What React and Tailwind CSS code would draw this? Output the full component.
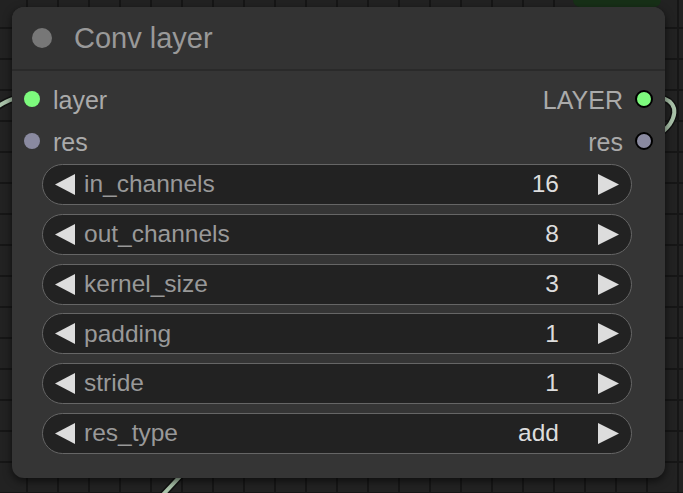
import React from "react";

const slots = [
  { inName: "layer", outName: "LAYER", color: "bg-[#7dfa7d]" },
  { inName: "res", outName: "res", color: "bg-[#8a8aa0]" },
];

const widgets = [
  { name: "in_channels", value: "16" },
  { name: "out_channels", value: "8" },
  { name: "kernel_size", value: "3" },
  { name: "padding", value: "1" },
  { name: "stride", value: "1" },
  { name: "res_type", value: "add" },
];

const Arrow = ({ dir }) => (
  <svg width="21" height="21" viewBox="0 0 21 21" className="shrink-0">
    {dir === "left" ? (
      <polygon points="20,0 20,21 0,10.5" fill="#dddddd" />
    ) : (
      <polygon points="0,0 0,21 21,10.5" fill="#dddddd" />
    )}
  </svg>
);

const Widget = ({ name, value }) => (
  <div className="h-[41px] flex items-center rounded-full border-[1.5px] border-[#666] bg-[#222] pl-[12px] pr-[12px] text-[24.5px]">
    <Arrow dir="left" />
    <span className="ml-[8px] text-[#999] flex-1">{name}</span>
    <span className="text-[#ddd] mr-[39px]">{value}</span>
    <Arrow dir="right" />
  </div>
);

export default function App() {
  return (
    <div
      className="relative w-[683px] h-[493px] overflow-hidden bg-[#222] bg-[linear-gradient(#161616_2px,transparent_2px),linear-gradient(90deg,#161616_2px,transparent_2px)] bg-[size:31px_31px] bg-[position:-5px_-4px]"
      style={{ fontFamily: '"Liberation Sans", Arial, sans-serif' }}
    >
      {/* other node peeking from the top */}
      <div className="absolute left-[573px] top-0 w-[88px] h-[7px] bg-[#173017] rounded-b-[8px]" />

      {/* links behind the node */}
      <svg className="absolute inset-0" width="683" height="493">
        <g fill="none" strokeLinecap="round">
          <path d="M-4 108 C 4 102, 10 99, 20 97" stroke="#111" strokeWidth="7" />
          <path d="M-4 108 C 4 102, 10 99, 20 97" stroke="#a9c2a9" strokeWidth="4" />
          <path d="M650 97 C 672 96, 680 108, 670 124 C 664 132, 660 134, 656 136" stroke="#111" strokeWidth="7" />
          <path d="M650 97 C 672 96, 680 108, 670 124 C 664 132, 660 134, 656 136" stroke="#a9c2a9" strokeWidth="4" />
          <path d="M186 470 L 158 500" stroke="#111" strokeWidth="7" />
          <path d="M186 470 L 158 500" stroke="#a9c2a9" strokeWidth="4" />
        </g>
      </svg>

      <div className="relative ml-[12px] pt-[7px]">
        <div className="w-[653px] h-[471px] rounded-[12px] bg-[#353535] shadow-[0_3px_8px_rgba(0,0,0,0.6)] overflow-hidden text-[25px] leading-none">
          {/* title */}
          <div className="h-[64px] flex items-center bg-[#333] border-b-[2px] border-[#2a2a2a]">
            <div className="ml-[20px] w-[20px] h-[20px] rounded-full bg-[#777]" />
            <span className="ml-[22px] text-[29px] text-[#999]">Conv layer</span>
          </div>

          {/* slots */}
          <div className="pt-[8px]">
            {slots.map((s) => (
              <div key={s.inName} className="h-[42px] flex items-center pl-[12px] pr-[12px]">
                <div className={`w-[16px] h-[16px] rounded-full ${s.color} -mt-[2px]`} />
                <span className="ml-[13px] text-[#aaa] flex-1">{s.inName}</span>
                <span className="text-[#aaa] mr-[12px]">{s.outName}</span>
                <div className={`w-[18px] h-[18px] rounded-full border-[2px] border-black ${s.color} -mt-[2px]`} />
              </div>
            ))}
          </div>

          {/* widgets */}
          <div className="pl-[30px] pr-[33px] pt-[1px] flex flex-col gap-[8.8px]">
            {widgets.map((w) => (
              <Widget key={w.name} name={w.name} value={w.value} />
            ))}
          </div>
        </div>
      </div>
    </div>
  );
}
